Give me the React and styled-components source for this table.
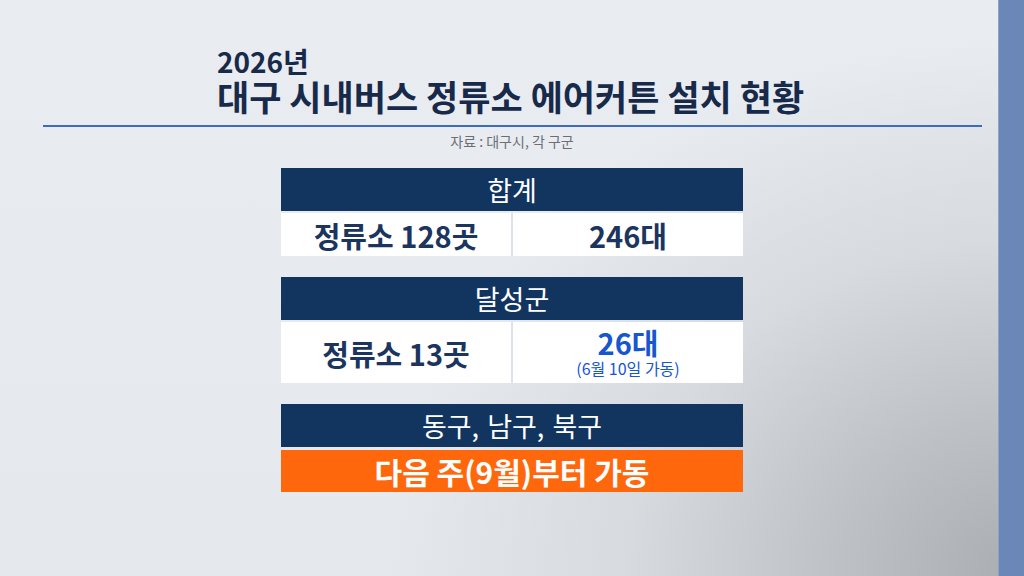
import styled, { createGlobalStyle } from 'styled-components'

const GlobalStyle = createGlobalStyle`
  html, body {
    margin: 0;
    padding: 0;
  }
  body {
    font-family: "Noto Sans CJK KR", "Noto Sans", sans-serif;
  }
`

const summary = [
  {
    title: '합계',
    left: '정류소 128곳',
    right: { main: '246대' },
  },
  {
    title: '달성군',
    left: '정류소 13곳',
    right: { main: '26대', note: '(6월 10일 가동)', highlight: true },
    tall: true,
  },
]

const App = () => {
  return (
    <>
      <GlobalStyle />
      <Screen>
        <Main>
          <Heading>
            <Year>2026년</Year>
            <Title>대구 시내버스 정류소 에어커튼 설치 현황</Title>
          </Heading>
          <Rule />
          <Source>자료 : 대구시, 각 구군</Source>
          <Stack>
            {summary.map((item) => (
              <Card key={item.title}>
                <CardHeader>{item.title}</CardHeader>
                <Row $tall={item.tall}>
                  <Cell>
                    <Value>{item.left}</Value>
                  </Cell>
                  <Cell $stacked={!!item.right.note}>
                    <Value $highlight={item.right.highlight}>{item.right.main}</Value>
                    {item.right.note && <Note>{item.right.note}</Note>}
                  </Cell>
                </Row>
              </Card>
            ))}
            <Card>
              <CardHeader>동구, 남구, 북구</CardHeader>
              <Banner>다음 주(9월)부터 가동</Banner>
            </Card>
          </Stack>
        </Main>
        <SideBar />
      </Screen>
    </>
  )
}

const Screen = styled.div`
display: flex;
width: 1024px;
height: 576px;
overflow: hidden;
background:
  radial-gradient(ellipse 640px 540px at 100% 100%, #a9adb1 0%, #bec2c7 30%, #d7dbe0 62%, rgba(230, 233, 238, 0) 100%),
  linear-gradient(180deg, #e9ecf1 0%, #e5e8ed 100%);
`

const Main = styled.div`
flex: 1;
display: flex;
flex-direction: column;
`

const Heading = styled.div`
padding: 47px 0 0 217px;
color: #182a4a;
font-weight: 700;
`

const Year = styled.div`
font-size: 28px;
line-height: 28px;
`

const Title = styled.div`
margin-top: 3px;
font-size: 35px;
line-height: 36px;
`

const Rule = styled.div`
height: 2px;
margin: 11px 16px 0 43px;
background: #3d6cbf;
`

const Source = styled.div`
margin-top: 6px;
padding-left: 26px;
text-align: center;
font-size: 14px;
line-height: 16px;
color: #6b6f75;
`

const Stack = styled.div`
display: flex;
flex-direction: column;
gap: 21px;
width: 462px;
margin: 19px 0 0 281px;
`

const Card = styled.div`
display: flex;
flex-direction: column;
gap: 2px;
`

const CardHeader = styled.div`
height: 43px;
display: flex;
align-items: center;
justify-content: center;
background: #12355f;
color: #ffffff;
font-size: 27px;
font-weight: 400;
word-spacing: 2px;
`

const Row = styled.div`
display: grid;
grid-template-columns: 230px 1fr;
gap: 2px;
height: ${(p) => (p.$tall ? '61px' : '43px')};
background: #dde2ea;
`

const Cell = styled.div`
display: flex;
flex-direction: column;
align-items: center;
justify-content: ${(p) => (p.$stacked ? 'flex-start' : 'center')};
padding-top: ${(p) => (p.$stacked ? '5px' : '0')};
box-sizing: border-box;
background: #ffffff;
`

const Value = styled.div`
font-size: 29px;
line-height: 30px;
font-weight: 700;
color: ${(p) => (p.$highlight ? '#1656cf' : '#1b355e')};
`

const Note = styled.div`
margin-top: 2px;
font-size: 16px;
line-height: 18px;
color: #1656cf;
`

const Banner = styled.div`
height: 42px;
margin-top: 1px;
display: flex;
align-items: center;
justify-content: center;
background: #ff670d;
color: #ffffff;
font-size: 30px;
font-weight: 700;
`

const SideBar = styled.div`
width: 26px;
flex-shrink: 0;
background: #6a87b7;
border-left: 1px solid #8da4c9;
box-sizing: border-box;
`

export default App
